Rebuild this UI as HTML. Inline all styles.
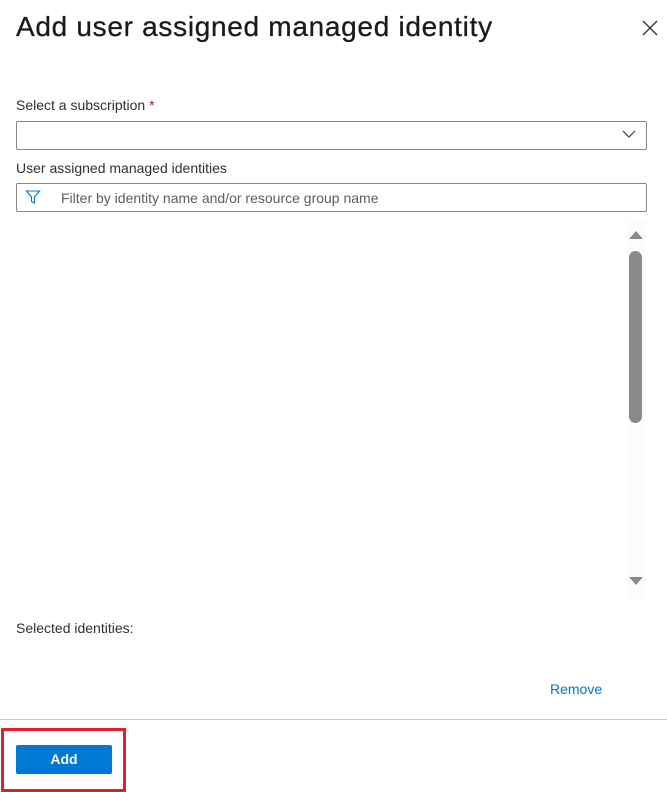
<!DOCTYPE html>
<html><head><meta charset="utf-8"><style>
body{margin:0;width:667px;height:792px;background:#fff;font-family:"Liberation Sans",sans-serif;color:#323130;position:relative;overflow:hidden}
.a{position:absolute}
</style></head><body>
<div class="a" style="left:16px;top:11px;font-size:28px;font-weight:500;color:#1b1a19;letter-spacing:0.7px;-webkit-text-stroke:0.3px #1b1a19">Add user assigned managed identity</div>
<svg class="a" style="left:642px;top:20px" width="16" height="16"><path d="M1 1L15 15M15 1L1 15" stroke="#323130" stroke-width="1.3"/></svg>
<div class="a" style="left:16px;top:97px;font-size:14px">Select a subscription <span style="color:#a4262c">*</span></div>
<div class="a" style="left:16px;top:121px;width:629px;height:27px;border:1px solid #8a8886;border-radius:2px"></div>
<svg class="a" style="left:622px;top:130px" width="14" height="9"><path d="M1 1L7 7L13 1" stroke="#323130" fill="none" stroke-width="1.1"/></svg>
<div class="a" style="left:16px;top:160px;font-size:14px">User assigned managed identities</div>
<div class="a" style="left:16px;top:183px;width:629px;height:27px;border:1px solid #8a8886;border-radius:2px"></div>
<svg class="a" style="left:25px;top:189px" width="16" height="16"><path d="M1.5 2H14.5L9.5 8V14L6.5 12.5V8Z" stroke="#0078d4" fill="none" stroke-width="1.1"/></svg>
<div class="a" style="left:61px;top:190px;font-size:14px;color:#605e5c">Filter by identity name and/or resource group name</div>
<div class="a" style="left:627px;top:220px;width:19px;height:380px;background:#fcfcfc"></div>
<svg class="a" style="left:627px;top:228px" width="19" height="12"><path d="M2 11H16L9 3Z" fill="#8a8a8a"/></svg>
<div class="a" style="left:629px;top:251px;width:13px;height:172px;background:#8a8a8a;border-radius:7px"></div>
<svg class="a" style="left:627px;top:576px" width="19" height="12"><path d="M2 1H16L9 9Z" fill="#8a8a8a"/></svg>
<div class="a" style="left:16px;top:620px;font-size:14px">Selected identities:</div>
<div class="a" style="left:550px;top:681px;font-size:14px;color:#0078d4">Remove</div>
<div class="a" style="left:0;top:719px;width:667px;height:1px;background:#c8c6c4"></div>
<div class="a" style="left:1px;top:728px;width:119px;height:58px;border:3px solid #e3202a"></div>
<div class="a" style="left:16px;top:745px;width:96px;height:29px;background:#0078d4;border-radius:2px;color:#fff;font-weight:bold;font-size:14px;text-align:center;line-height:29px">Add</div>
</body></html>
